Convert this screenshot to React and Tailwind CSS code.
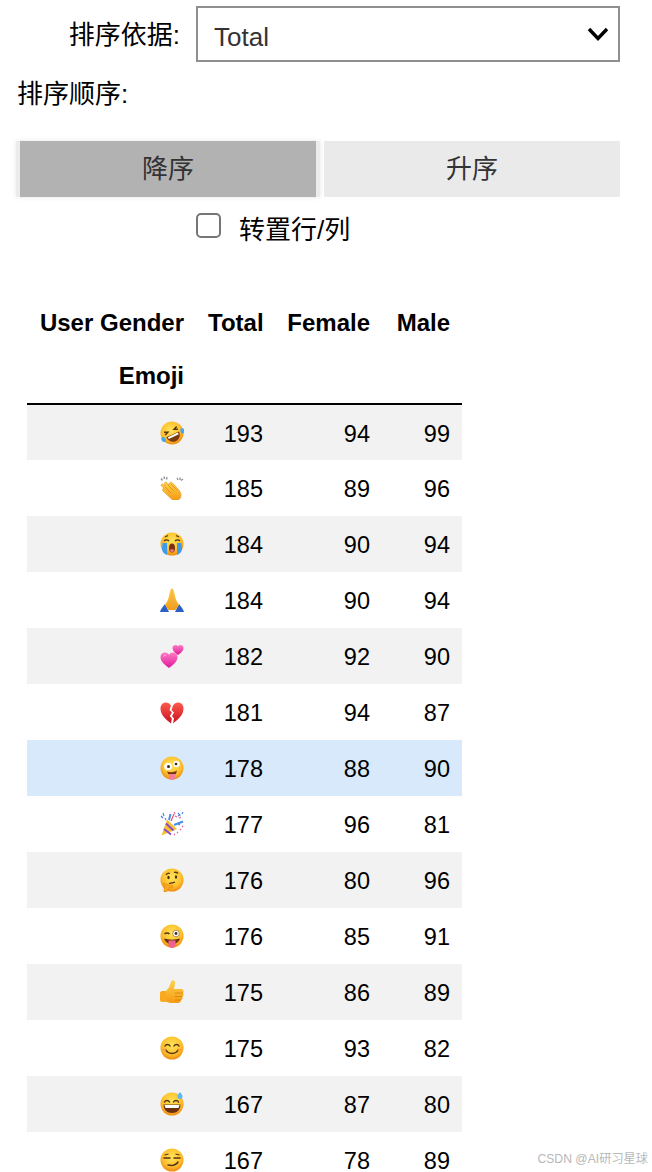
const FONT = "font-['Liberation_Sans','Noto_Sans_CJK_SC',sans-serif]";

// shared gradients for the emoji drawings
function EmojiDefs() {
  return (
    <svg className="absolute h-0 w-0">
      <defs>
        <radialGradient id="face" cx="50%" cy="38%" r="62%">
          <stop offset="0%" stopColor="#ffe45c" />
          <stop offset="65%" stopColor="#fdc12e" />
          <stop offset="100%" stopColor="#ee8a12" />
        </radialGradient>
        <linearGradient id="hand" x1="0" y1="0" x2="0" y2="1">
          <stop offset="0%" stopColor="#ffd24a" />
          <stop offset="100%" stopColor="#f59a14" />
        </linearGradient>
        <linearGradient id="pink" x1="0" y1="0" x2="0" y2="1">
          <stop offset="0%" stopColor="#ff7cc4" />
          <stop offset="100%" stopColor="#e0189a" />
        </linearGradient>
        <linearGradient id="red" x1="0" y1="0" x2="0" y2="1">
          <stop offset="0%" stopColor="#ff5a4f" />
          <stop offset="100%" stopColor="#c80f1e" />
        </linearGradient>
      </defs>
    </svg>
  );
}

const Face = ({ children, transform }) => (
  <g transform={transform}>
    <circle cx="12" cy="12" r="11.5" fill="url(#face)" />
    {children}
  </g>
);

const EMOJI = {
  rofl: (
    <Face transform="rotate(-25 12 12)">
      <path d="M5 13.5h14c0 4.5-3 7.5-7 7.5s-7-3-7-7.5z" fill="#7a3b12" />
      <path d="M6.5 14h11v2h-11z" fill="#fff" />
      <path d="M5 8l3.5 1.5L5 11M19 8l-3.5 1.500L19 11" fill="none" stroke="#5b3413" strokeWidth="1.500" />
      <path d="M0 12c-1 3 0 5 2 5s2-2 1-5zM24 12c1 3 0 5-2 5s-2-2-1-5z" fill="#45a6ee" />
    </Face>
  ),
  clap: (
    <g>
      <path d="M1 9.500c0-1.500 1.500-2 2.500-1L5 10 4.500 7.500c0-1.500 2-2 3-.5l1.500 2 .5-2c.5-1 2-1 3 0l6 6.500c3 3.500 3 7 1.500 9-2.500 2.500-6.500 2.500-9 0l-8-7.500c-1-1-.5-2.500 1-2.500z" fill="url(#hand)" stroke="#d98209" strokeWidth=".5" />
      <path d="M5 11l6 6M8 9l6 6M11 8l6 6" stroke="#d98209" strokeWidth=".7" />
      <path d="M1 2.500l1.500 2M4 .5l.5 2.500M7 1L6.500 3.500M17 2l1 2M20 1.500V4M23 3l-2 1.500" stroke="#8a8f98" strokeWidth="1.300" />
    </g>
  ),
  sob: (
    <Face>
      <path d="M2.500 11h4.500v12c-2.500-1-5-3-5-7zM21.500 11H17v12c2.500-1 5-3 5-7z" fill="#3f9bea" />
      <ellipse cx="12" cy="16" rx="3" ry="4.500" fill="#7a3212" />
      <ellipse cx="12" cy="18.500" rx="2" ry="1.500" fill="#f2707f" />
      <path d="M4 9c1.500-1.500 3.500-1.500 5 0M15 9c1.500-1.500 3.500-1.500 5 0" fill="none" stroke="#5b3413" strokeWidth="1.500" />
      <path d="M5 5l3-1.500M19 5l-3-1.500" stroke="#5b3413" strokeWidth="1.200" />
    </Face>
  ),
  pray: (
    <g>
      <path d="M0 24c.5-3 3-5 5-8l4 8zM24 24c-.5-3-3-5-5-8l-4 8z" fill="#2a62c4" />
      <path d="M11.800 0c-1.800 2-2.300 5-3 9-.6 3-2 5-3.800 8l3.500 5h3.300zM12.200 0c1.800 2 2.300 5 3 9 .6 3 2 5 3.800 8l-3.500 5h-3.300z" fill="url(#hand)" />
      <path d="M12 1v21" stroke="#c9780c" strokeWidth=".5" />
    </g>
  ),
  hearts: (
    <g>
      <path d="M18 11c-3-2.200-5.500-4-5.500-7 0-3.500 4-4 5.500-1.800C19.500 0 23.500.5 23.500 4c0 3-2.500 4.800-5.500 7z" fill="url(#pink)" />
      <path d="M9 24C4.500 20.500.5 17.500.5 13c0-5 6-6 8.500-2.500 2.500-3.500 8.500-2.500 8.500 2.500 0 4.500-4 7.500-8.500 11z" fill="url(#pink)" />
      <path d="M3.500 12.500c.5-1 1.500-1.500 2.500-1.500" stroke="#ffc0e4" strokeWidth="1" fill="none" />
    </g>
  ),
  broken: (
    <g>
      <path d="M11 23.500C5.500 19 .5 15 .5 8.500.5 2 8 .5 11 5.500L9.500 10l2.500 2.500L9.800 16l2 2.500z" fill="url(#red)" />
      <path d="M13 23.500c5.500-4.500 10.500-8.500 10.500-15C23.500 2 16 .5 13 5.500L11.500 10l2.500 2.500-2 3.500 2 2.500z" fill="url(#red)" />
    </g>
  ),
  zany: (
    <Face>
      <circle cx="8" cy="10.500" r="3.800" fill="#fff" />
      <circle cx="8.500" cy="10.500" r="1.500" fill="#3a2a18" />
      <circle cx="16.500" cy="8" r="3.200" fill="#fff" />
      <circle cx="16" cy="8" r="1.300" fill="#3a2a18" />
      <path d="M7 15.500c3 1 7 1 10-1-.5 3-2 4.500-3 5h-4c-1.500-1-2.500-2.500-3-4z" fill="#7a3212" />
      <path d="M9 18h6v2.500c0 2-1 3.500-3 3.500s-3-1.500-3-3.500z" fill="#f27c9a" />
    </Face>
  ),
  party: (
    <g>
      <path d="M1.500 23.500l5.500-16 10 9.500z" fill="#f7c02e" />
      <path d="M4 17l7 5.500M6 11.500l7.500 7" stroke="#8b4fc7" strokeWidth="2" />
      <path d="M9 8l1.500-6M14 13l9-3.500" stroke="#4a90e8" strokeWidth="2" />
      <path d="M11 9l3-7" stroke="#ee4f5f" strokeWidth="1.200" />
      <path d="M1 4l2 2M3 1l1 3M5 6l1 2M18 1l2 2-2 1M23 0l-1 2M18 12l2 1" stroke="#3d7fe0" strokeWidth="1.100" fill="none" />
      <path d="M15 4l2 1M14 0l1 2M19 6l2-1M20 17l1 1M17 20l1 1M22 14l1 1M14 22l1 1" stroke="#e85a9a" strokeWidth="1.100" />
    </g>
  ),
  thinking: (
    <Face>
      <path d="M6 7c1-1.500 3-2 4-1.500M14 4.500c1.500-.5 3 0 4 1" fill="none" stroke="#5b3413" strokeWidth="1.300" />
      <ellipse cx="8.500" cy="9.500" rx="1.200" ry="1.700" fill="#4a2a10" />
      <ellipse cx="16" cy="9" rx="1.200" ry="1.700" fill="#4a2a10" />
      <path d="M9 15.500c2-.5 4-.5 6-1.500" fill="none" stroke="#5b3413" strokeWidth="1.200" />
      <path d="M4 24c-.5-2 .5-4 1-6l-1.500-2c0-1 1-1 2-.5l3 1.500 4 .5c1 0 1 1.500 0 2l-4 .5c-.5 1.500-1 3-2 4z" fill="#f8a91f" stroke="#dc7f0a" strokeWidth=".5" />
    </Face>
  ),
  wink: (
    <Face>
      <path d="M4.500 10c1.500-1.500 3.500-1.500 5 0" fill="none" stroke="#5b3413" strokeWidth="1.500" />
      <circle cx="16" cy="9.500" r="3.300" fill="#fff" stroke="#7a5020" strokeWidth=".6" />
      <circle cx="16" cy="9.500" r="1.400" fill="#3a2a18" />
      <path d="M4 14.500c5 1.500 11 1.500 16 0-1 3.500-4 5.500-8 5.500s-7-2-8-5.500z" fill="#6c3210" />
      <path d="M8.500 16.500h7v4c0 2.300-1.500 3.500-3.500 3.500s-3.500-1.200-3.500-3.500z" fill="#f0628e" />
    </Face>
  ),
  thumb: (
    <g>
      <path d="M0 13c0-1 1-2 2-2h4v11H2c-1 0-2-1-2-2z" fill="#f8a91f" />
      <path d="M6 11c2-2 4-5 5-9 .3-2.500 4.500-2.500 4 1.500l-1 5.500h7c3 0 3 3 2 4 1 1.500.5 3-.5 3.500.5 1.500 0 3-1.500 3.500 0 2-1.500 3-3 3H11c-2 0-3-1-5-1.500z" fill="url(#hand)" />
      <path d="M15 13h8M15 16.500h7M15 20h6" stroke="#d98209" strokeWidth=".8" />
    </g>
  ),
  smile: (
    <Face>
      <path d="M5 10c1-2 4-2 5 0M14 10c1-2 4-2 5 0" fill="none" stroke="#5b3413" strokeWidth="1.500" strokeLinecap="round" />
      <path d="M6 14c2 4.500 10 4.500 12 0" fill="none" stroke="#5b3413" strokeWidth="1.500" strokeLinecap="round" />
      <ellipse cx="4.500" cy="14" rx="2" ry="1.200" fill="#f78d3d" opacity=".6" />
      <ellipse cx="19.500" cy="14" rx="2" ry="1.200" fill="#f78d3d" opacity=".6" />
    </Face>
  ),
  sweat: (
    <Face>
      <path d="M4.500 10c1-2 4-2 5 0M13.500 10c1-2 4-2 5 0" fill="none" stroke="#5b3413" strokeWidth="1.500" strokeLinecap="round" />
      <path d="M3.500 12.500h17c0 5-3.500 8.500-8.500 8.500s-8.500-3.500-8.500-8.500z" fill="#6c3210" />
      <path d="M4.500 13h15l-1 3h-13z" fill="#fff" />
      <path d="M20 0c-1.500 2-2.500 3-2.500 4.500a2.500 2.500 0 0 0 5 0C22.500 3 21.500 2 20 0z" fill="#5cb8f2" />
    </Face>
  ),
  smirk: (
    <Face>
      <path d="M4 10h6M14 10h6" stroke="#5b3413" strokeWidth="1.600" strokeLinecap="round" />
      <path d="M4.500 7l4-1M15.500 6l4 1" stroke="#5b3413" strokeWidth="1.200" />
      <path d="M8 17c4 1 8 0 10-3" fill="none" stroke="#5b3413" strokeWidth="1.500" strokeLinecap="round" />
    </Face>
  ),
};

const ROWS = [
  ["rofl", 193, 94, 99],
  ["clap", 185, 89, 96],
  ["sob", 184, 90, 94],
  ["pray", 184, 90, 94],
  ["hearts", 182, 92, 90],
  ["broken", 181, 94, 87],
  ["zany", 178, 88, 90],
  ["party", 177, 96, 81],
  ["thinking", 176, 80, 96],
  ["wink", 176, 85, 91],
  ["thumb", 175, 86, 89],
  ["smile", 175, 93, 82],
  ["sweat", 167, 87, 80],
  ["smirk", 167, 78, 89],
];

function rowBg(i) {
  if (i === 6) return "bg-[#d7e9fa]";
  return i % 2 === 0 ? "bg-[#f2f2f2]" : "bg-white";
}

export default function App() {
  return (
    <div className={`relative h-[1172px] w-[652px] overflow-hidden bg-white text-black ${FONT}`}>
      <EmojiDefs />

      {/* sort by */}
      <div className="flex items-center pt-[6px]">
        <label className="w-[196px] pr-[16px] pt-[3px] text-right text-[26px] leading-[53px]">排序依据:</label>
        <div className="relative h-[56px] w-[424px]">
          <select className="h-full w-full appearance-none border-2 border-[#8f8f8f] bg-white pl-[16px] pt-[6px] text-[26px] text-[#333] outline-none">
            <option>Total</option>
          </select>
          <svg viewBox="0 0 22 14" className="absolute right-[11px] top-[21px] h-[14px] w-[22px]">
            <path d="M2 2l9 9.500L20 2" fill="none" stroke="#000" strokeWidth="3.400" />
          </svg>
        </div>
      </div>

      {/* sort order */}
      <div className="pl-[17px] text-[26px] leading-[64px]">排序顺序:</div>
      <div className="mt-[15px] flex gap-[4px] pl-[16px]">
        <button className="h-[56px] w-[304px] border-x-4 border-[#ececec] bg-[#b2b2b2] pt-[1px] text-[26px] text-[#333] shadow-[0_0_5px_rgba(0,0,0,0.1)]">降序</button>
        <button className="h-[56px] w-[296px] bg-[#eaeaea] pt-[1px] text-[26px] text-[#333]">升序</button>
      </div>

      {/* transpose */}
      <label className="mt-[16px] flex items-start pl-[196px]">
        <input type="checkbox" className="h-[25px] w-[25px] appearance-none rounded-[5px] border-2 border-[#767676] bg-white" />
        <span className="ml-[18px] pt-[1px] text-[26px] leading-[32px]">转置行/列</span>
      </label>

      {/* table */}
      <table className="ml-[27px] mt-[50px] w-[435px] table-fixed border-collapse text-right text-[23.5px]">
        <colgroup>
          <col className="w-[169px]" />
          <col className="w-[79px]" />
          <col className="w-[107px]" />
          <col className="w-[80px]" />
        </colgroup>
        <thead className="text-[24px]">
          <tr className="h-[54px] font-bold">
            <th className="px-[12px]">User Gender</th>
            <th className="px-[12px]">Total</th>
            <th className="px-[12px]">Female</th>
            <th className="px-[12px]">Male</th>
          </tr>
          <tr className="h-[54px] border-b-2 border-black font-bold">
            <th className="px-[12px] pb-[2px]">Emoji</th>
            <th />
            <th />
            <th />
          </tr>
        </thead>
        <tbody>
          {ROWS.map(([emoji, total, female, male], i) => (
            <tr key={emoji} className={`h-[56px] ${rowBg(i)}`}>
              <td className="px-[12px]">
                <svg viewBox="0 0 24 24" className="ml-auto h-[24px] w-[24px]">{EMOJI[emoji]}</svg>
              </td>
              <td className="px-[12px] pt-[4px]">{total}</td>
              <td className="px-[12px] pt-[4px]">{female}</td>
              <td className="px-[12px] pt-[4px]">{male}</td>
            </tr>
          ))}
        </tbody>
      </table>

      {/* watermark */}
      <div className="absolute bottom-[4px] right-[4px] text-[12.200px] text-[#b8b8b8]">CSDN @AI研习星球</div>
    </div>
  );
}
